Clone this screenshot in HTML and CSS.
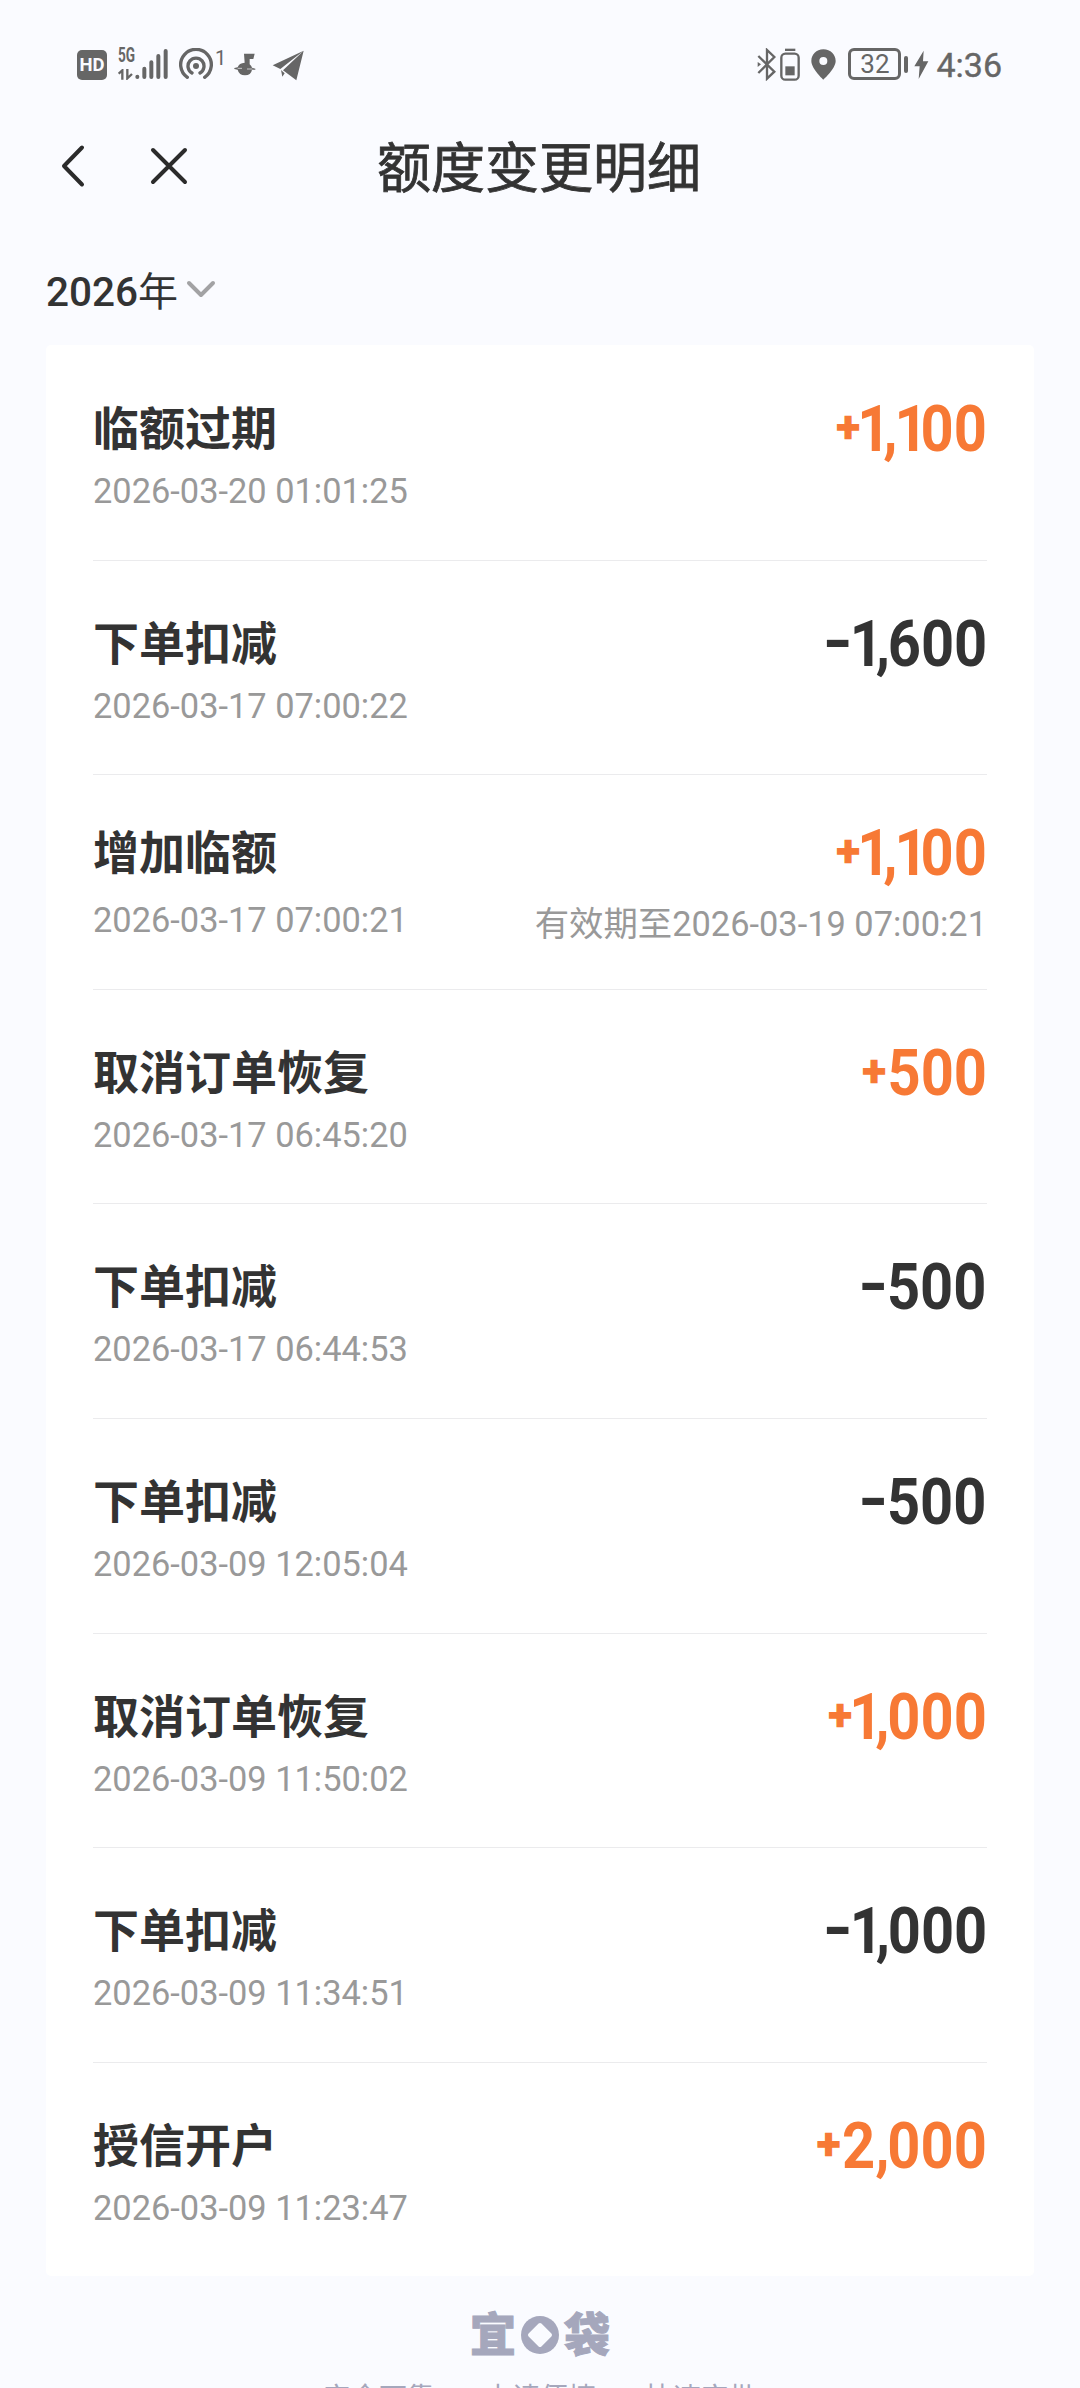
FILE: index.html
```html
<!DOCTYPE html>
<html lang="zh-CN">
<head>
<meta charset="utf-8">
<title>额度变更明细</title>
<link rel="stylesheet" href="styles.css">
</head>
<body>
<header class="status">
  <div class="status-left">
    <span class="hd">HD</span>
    <div class="signal">
      <div class="net"><span class="net-type">5G</span>
        <svg width="15" height="11" viewBox="0 0 45 33" fill="none" stroke="#666" stroke-width="7"><path d="M2 14L13 4V32M28 0V28L42 15"/></svg>
      </div>
      <svg class="bars" width="33" height="32" viewBox="0 0 99 96" stroke="#666" stroke-width="12" stroke-linecap="round"><path d="M7 87V86M28 87V62M49 87V43M70 87V24M92 87V9"/></svg>
    </div>
    <svg class="hotspot" width="36" height="32" viewBox="0 0 108 96" fill="none" stroke="#666" stroke-width="10" stroke-linecap="round"><circle cx="54" cy="54" r="9" fill="#666" stroke="none"/><path d="M42 75A24 24 0 1 1 66 75M28 88A46 46 0 1 1 80 88"/></svg>
    <span class="hot-count">1</span>
    <svg class="music" width="22" height="24" viewBox="0 0 66 72" fill="#666"><path d="M30 2H62L58 18H47V34Q53 39 54 44L64 47V50H54Q51 67 33 67Q15 67 11 50L1 48V45L11 43Q15 30 32 29Z"/><path d="M11 46H24M39 48H55" stroke="#fafbff" stroke-width="2"/></svg>
    <svg class="plane" width="32" height="31" viewBox="0 0 96 93" fill="#666"><path d="M95 2L2 46L25 57ZM95 2L33 61L73 91ZM27 60L31 80L38 70Z"/></svg>
  </div>
  <div class="status-right">
    <svg class="bt" width="20" height="33" viewBox="0 0 60 99" fill="none" stroke="#666" stroke-width="7"><path d="M4 24L52 71L30 92V6L52 27L4 75"/><path d="M2 42L12 49L2 57Z" fill="#666" stroke="none"/></svg>
    <svg class="bt-batt" width="20" height="33" viewBox="0 0 60 99"><path d="M15 2H46V9H15Z" fill="#666"/><rect x="4" y="17" width="52" height="78" rx="12" fill="none" stroke="#666" stroke-width="7"/><path d="M16 55H44V82H16Z" fill="#666"/></svg>
    <svg class="pin" width="25" height="31" viewBox="0 0 75 93" fill="#666" fill-rule="evenodd"><path d="M37 1C16 1 1 17 1 36C1 59 37 92 37 92S74 59 74 36C74 17 59 1 37 1ZM37 24A12 12 0 1 1 37 48A12 12 0 1 1 37 24Z"/></svg>
    <span class="battery">32</span><i class="nub"></i>
    <svg class="bolt" width="15" height="30" viewBox="0 0 45 90" fill="#666"><path d="M29 2L1 49H17L14 87L43 34H27Z"/></svg>
    <span class="clock">4:36</span>
  </div>
</header>
<nav class="nav">
  <svg class="back" width="26" height="46" viewBox="0 0 26 46"><path d="M22 4.5L4 23L22 41.5"/></svg>
  <svg class="close" width="42" height="42" viewBox="0 0 42 42"><path d="M5 5L37 37M37 5L5 37"/></svg>
  <h1 class="heading">额度变更明细</h1>
</nav>
<div class="year"><span class="year-text">2026<span class="nian">年</span></span>
  <svg width="30" height="20" viewBox="0 0 30 20"><path d="M3 3L15 15L27 3"/></svg>
</div>
<main class="card">
  <section class="row"><div class="line"><h2>临额过期</h2><b class="amt up"><i class="plus">+</i><i class="one">1</i><i class="comma">,</i><i class="one">1</i>00</b></div><div class="sub"><time>2026-03-20 01:01:25</time></div></section>
  <section class="row"><div class="line"><h2>下单扣减</h2><b class="amt"><i class="minus">-</i><i class="one">1</i><i class="comma">,</i>600</b></div><div class="sub"><time>2026-03-17 07:00:22</time></div></section>
  <section class="row tall"><div class="line"><h2>增加临额</h2><b class="amt up"><i class="plus">+</i><i class="one">1</i><i class="comma">,</i><i class="one">1</i>00</b></div><div class="sub"><time>2026-03-17 07:00:21</time><span class="valid">有效期至2026-03-19 07:00:21</span></div></section>
  <section class="row"><div class="line"><h2>取消订单恢复</h2><b class="amt up"><i class="plus">+</i>500</b></div><div class="sub"><time>2026-03-17 06:45:20</time></div></section>
  <section class="row"><div class="line"><h2>下单扣减</h2><b class="amt"><i class="minus">-</i>500</b></div><div class="sub"><time>2026-03-17 06:44:53</time></div></section>
  <section class="row"><div class="line"><h2>下单扣减</h2><b class="amt"><i class="minus">-</i>500</b></div><div class="sub"><time>2026-03-09 12:05:04</time></div></section>
  <section class="row"><div class="line"><h2>取消订单恢复</h2><b class="amt up"><i class="plus">+</i><i class="one">1</i><i class="comma">,</i>000</b></div><div class="sub"><time>2026-03-09 11:50:02</time></div></section>
  <section class="row"><div class="line"><h2>下单扣减</h2><b class="amt"><i class="minus">-</i><i class="one">1</i><i class="comma">,</i>000</b></div><div class="sub"><time>2026-03-09 11:34:51</time></div></section>
  <section class="row"><div class="line"><h2>授信开户</h2><b class="amt up"><i class="plus">+</i>2<i class="comma">,</i>000</b></div><div class="sub"><time>2026-03-09 11:23:47</time></div></section>
</main>
<footer class="footer">
  <div class="brand"><span>宜</span>
    <svg width="38" height="38" viewBox="0 0 38 38"><circle cx="19" cy="19" r="19" fill="#a5a7bc"/><path d="M19 9L29 19L19 29L9 19Z" fill="#fafbff" stroke="#fafbff" stroke-width="4" stroke-linejoin="round"/></svg>
    <span>袋</span></div>
  <div class="slogan"><span>安全可靠</span><span>申请便捷</span><span>快速审批</span></div>
</footer>
</body>
</html>
```
FILE: styles.css
```css
* { box-sizing: border-box; }
body {
  margin: 0;
  width: 1080px;
  height: 2388px;
  overflow: hidden;
  background: #fafbff;
  color: #333;
  font-family: Roboto, "Noto Sans CJK SC", sans-serif;
}
svg { display: block; flex: none; }
i { font-style: normal; }
h1, h2 { margin: 0; }

.status {
  height: 130px;
  padding: 0 78px 0 77px;
  display: flex;
  justify-content: space-between;
  color: #666;
}
.status-left, .status-right { display: flex; align-items: flex-start; padding-top: 48px; }
.hd {
  width: 30px; height: 30px; margin-top: 2px;
  border-radius: 5px;
  background: #666; color: #fafbff;
  font: 700 18.5px/31px Roboto, sans-serif;
  text-align: center;
}
.signal { display: flex; margin-left: 11px; }
.net { width: 17px; display: flex; flex-direction: column; gap: 6px; }
.net-type { font: 700 20px/15px "Roboto", sans-serif; transform: scaleX(.68); transform-origin: left; }
.hotspot { margin-left: 10px; }
.hot-count { width: 9px; margin-left: 1px; font-size: 20px; line-height: 20px; }
.music { margin: 5px 0 0 10px; }
.plane { margin: 2px 0 0 16px; }
.pin { margin: 1px 0 0 11px; }
.bt-batt { margin-left: 3px; }
.battery {
  width: 53px; height: 32px; margin: 0 0 0 12px;
  border: 3px solid #666; border-radius: 6px;
  font-size: 26px; line-height: 26px; text-align: center;
}
.nub { width: 4px; height: 17px; margin: 8px 0 0 3px; border-radius: 2px; background: #666; }
.bolt { margin: 2px 0 0 6px; }
.clock { margin-left: 7px; font-size: 34px; line-height: 34px; -webkit-text-stroke: .4px #666; }

.nav { display: flex; align-items: center; height: 74px; padding: 0 0 2px 60px; }
.nav path { fill: none; stroke: #2b2b2b; stroke-width: 4; stroke-linecap: round; stroke-linejoin: round; }
.close { margin-left: 62px; }
.heading { margin: 8px 0 0 187px; font-size: 54px; line-height: 74px; font-weight: 400; -webkit-text-stroke: .8px #333; }

.year { display: flex; align-items: center; height: 60px; margin: 58px 0 23px 46px; }
.year-text { font-size: 40.5px; line-height: 60px; font-weight: 500; }
.nian { font-size: 40px; font-weight: 400; }
.year svg { margin: -4px 0 0 8px; }
.year path { fill: none; stroke: #a2a2a4; stroke-width: 4; stroke-linecap: round; stroke-linejoin: round; }

.card { width: 988px; height: 1931px; margin: 0 46px; padding: 0 47px; border-radius: 5px; background: #fff; display: grid; grid-template-rows: repeat(9, 214.6px); }
.row { padding-top: 54px; }
.row + .row { padding-top: 53px; border-top: 1px solid #ebebed; }
.line { display: flex; justify-content: space-between; height: 60px; }
h2 { font-size: 46px; line-height: 60px; font-weight: 700; }
.amt { font-size: 65px; line-height: 60px; font-weight: 700; transform: scaleX(.89); transform-origin: right; white-space: nowrap; }
.up { color: #f77935; }
.one { letter-spacing: -8px; margin-left: -1px; }
.comma { letter-spacing: -2.5px; }
.plus { display: inline-block; margin-right: 2px; font-size: 48px; line-height: 40px; vertical-align: 7px; -webkit-text-stroke: 1.5px #f77935; transform: scaleY(.88); }
.minus { display: inline-block; margin-right: -2px; transform: translateY(-3px) scaleX(1.35); transform-origin: right; }
.plus + .one { margin-left: -5px; }
.minus + .one { margin-left: -2px; }
.sub { display: flex; justify-content: space-between; height: 40px; font-size: 34.4px; line-height: 40px; color: #999; margin-top: 12px; }
.row.tall { padding-top: 48px; }
.tall .sub { margin-top: 17px; }
.valid { padding-top: 4px; }

.footer { padding-top: 32px; color: #a5a7bc; }
.brand { display: flex; justify-content: center; align-items: center; gap: 5px; height: 54px; }
.brand span { font-size: 46px; line-height: 54px; font-weight: 900; -webkit-text-stroke: 1px #a5a7bc; }
.slogan { display: flex; justify-content: center; gap: 49px; margin-top: 17px; font-size: 28px; line-height: 40px; }
```
